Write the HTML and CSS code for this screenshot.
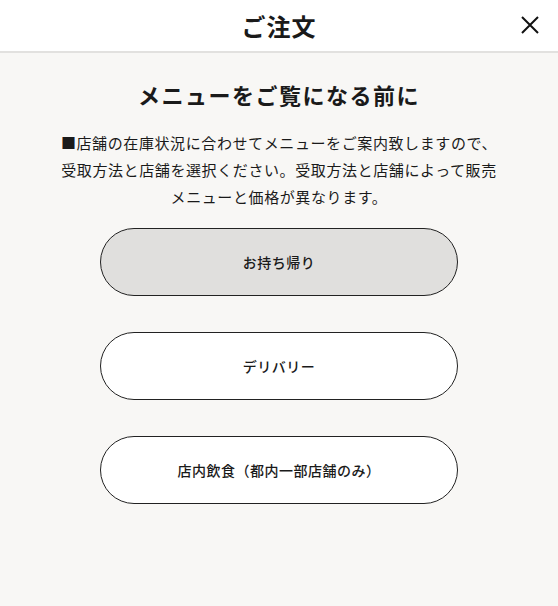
FILE: index.html
```html
<!DOCTYPE html>
<html lang="ja">

<head>
    <meta charset="UTF-8">
    <meta name="viewport" content="width=device-width, initial-scale=1.0">
    <title>ご注文</title>
    <link rel="stylesheet" href="styles.css">
</head>

<body>
    <div class="modal">
        <header class="modal-head">
            <h1 class="modal-title">ご注文</h1>
            <button class="close-btn" aria-label="閉じる">
                <svg width="18" height="18" viewBox="0 0 18 18">
                    <path d="M1 1 L17 17 M17 1 L1 17" stroke="#111" stroke-width="2" fill="none"/>
                </svg>
            </button>
        </header>

        <div class="modal-body">
            <h2 class="lead">メニューをご覧になる前に</h2>
            <p class="note">■店舗の在庫状況に合わせてメニューをご案内致しますので、受取方法と店舗を選択ください。受取方法と店舗によって販売メニューと価格が異なります。</p>

            <!-- 受取方法 -->
            <div class="choices">
                <button class="choice is-active">お持ち帰り</button>
                <button class="choice">デリバリー</button>
                <button class="choice">店内飲食（都内一部店舗のみ）</button>
            </div>
        </div>
    </div>
</body>

</html>
```

FILE: styles.css
```css
* {
    margin: 0;
    padding: 0;
    box-sizing: border-box;
}

body {
    width: 558px;
    height: 606px;
    background: #f8f7f5;
    font-family: "Noto Sans CJK JP", "Noto Sans", sans-serif;
    color: #1a1a1a;
}

.modal-head {
    height: 53px;
    background: #fff;
    border-bottom: 2px solid #e2e1df;
    display: flex;
    align-items: center;
    justify-content: center;
    position: relative;
}

.modal-title {
    font-size: 24px;
    font-weight: 700;
    letter-spacing: 1px;
}

.close-btn {
    position: absolute;
    right: 19px;
    top: 16px;
    width: 18px;
    height: 18px;
    border: none;
    background: none;
    display: flex;
}

.modal-body {
    padding: 24px 50px 0;
    display: flex;
    flex-direction: column;
    align-items: center;
}

.lead {
    font-size: 22px;
    font-weight: 700;
    letter-spacing: 1.5px;
    line-height: 34px;
}

.note {
    width: 446px;
    margin-top: 18px;
    font-size: 15px;
    line-height: 27px;
    letter-spacing: 0.6px;
    text-align: center;
}

.choices {
    margin-top: 18px;
    display: flex;
    flex-direction: column;
    gap: 36px;
}

.choice {
    width: 358px;
    height: 68px;
    border: 1.5px solid #222;
    border-radius: 34px;
    background: #fff;
    font-family: inherit;
    font-size: 14px;
    font-weight: 500;
    letter-spacing: 0.5px;
    color: #1a1a1a;
}

.choice.is-active {
    background: #e0dfdd;
}
```
